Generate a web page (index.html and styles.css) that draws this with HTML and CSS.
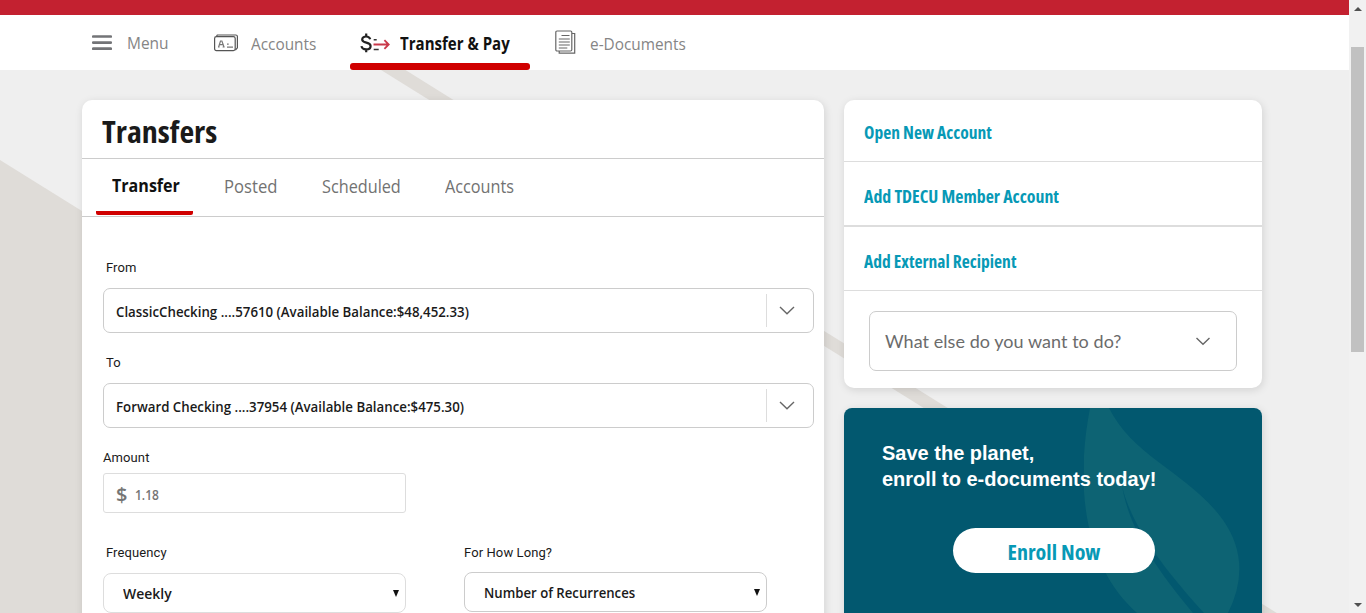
FILE: index.html
```html
<!DOCTYPE html>
<html lang="en">
<head>
<meta charset="utf-8">
<title>Transfers</title>
<link rel="stylesheet" href="styles.css">
</head>
<body>
<div class="app">
  <div class="page">
    <svg class="backdrop" width="1349" height="613" viewBox="0 0 1349 613" aria-hidden="true">
      <path d="M0 160 728 613H0Z"/>
      <path d="M381 70h24.500L1349 658v15Z"/>
    </svg>
    <div class="brandbar"></div>
    <nav class="nav">
      <a class="nav-item nav-menu"><svg width="20" height="16" viewBox="0 0 20 16"><path d="M1.200 1.500h17.600M1.200 7.600h17.600M1.200 13.700h17.600" stroke="#737477" stroke-width="2.700" stroke-linecap="round"/></svg><span class="t t-menu">Menu</span></a>
      <a class="nav-item nav-accounts"><svg width="24" height="18" viewBox="0 0 24 18" fill="none" stroke="#555" stroke-width="1.200"><rect x=".6" y="2.600" width="20.600" height="14" rx="1.800"/><path d="M2.500 2.400 3.300 1h18.500Q23.400 1 23.400 2.600v11.200l-2 2.400"/><path d="M4 13h1.600M8.600 13h2M4.700 12.800 6.500 7h1.400l2 5.800M5.600 10.600h3.500M13 10.100h1.700M13 13.100h6" stroke="#777"/></svg><span class="t t-accounts">Accounts</span></a>
      <a class="nav-item nav-transfer active"><svg width="30" height="22" viewBox="0 0 30 22" fill="none"><path d="M10.200 7.300C9.700 5.500 8.200 4.500 6.100 4.500 3.800 4.500 2.200 5.600 2.200 7.400c0 4.300 8.400 2.200 8.400 6.600 0 2.200-1.800 3.400-4.400 3.400-2.700 0-4.400-1.200-4.700-3.200M6.200 1.500v3M6.200 17.300v3" stroke="#222" stroke-width="2.200"/><path d="M13.700 7.800h3M13.700 17.500h5" stroke="#333" stroke-width="1.600"/><path d="M13.500 12.500h15M24.400 8.200l4.300 4.300-4.300 4.300" stroke="#c9394a" stroke-width="1.800"/></svg><span class="t t-transferpay">Transfer &amp; Pay</span></a>
      <a class="nav-item nav-docs"><svg width="21" height="25" viewBox="0 0 21 25" fill="none" stroke="#666" stroke-width="1.200"><rect x=".8" y="1" width="16" height="20" rx="1.200"/><path d="M17 3.500h2.700v19.700H4.200V21"/><path d="M6.500 5.500h8M3.800 9h11M3.800 12h11M3.800 15h11M3.800 18h8.500"/></svg><span class="t t-docs">e-Documents</span></a>
    </nav>
    <main class="main">
      <section class="card transfers">
        <h1><span class="t t-title">Transfers</span></h1>
        <div class="tabs">
          <a class="tab tab-active"><span class="t t-tab1">Transfer</span></a>
          <a class="tab tab-posted"><span class="t t-tab2">Posted</span></a>
          <a class="tab tab-scheduled"><span class="t t-tab3">Scheduled</span></a>
          <a class="tab tab-accounts"><span class="t t-tab4">Accounts</span></a>
        </div>
        <div class="form">
          <label class="indent">From</label>
          <div class="combo"><span class="t t-from">ClassicChecking ....57610 (Available Balance:$48,452.33)</span><span class="combo-arrow"><svg width="16" height="9" viewBox="0 0 16 9"><path d="m1 1 7 6.800L15 1"/></svg></span></div>
          <label class="indent">To</label>
          <div class="combo"><span class="t t-to">Forward Checking ....37954 (Available Balance:$475.30)</span><span class="combo-arrow"><svg width="16" height="9" viewBox="0 0 16 9"><path d="m1 1 7 6.800L15 1"/></svg></span></div>
          <label>Amount</label>
          <div class="amount"><span class="currency">$</span><span class="t t-amount">1.18</span></div>
          <div class="row">
            <div class="col"><label class="indent">Frequency</label><div class="select light"><span class="t t-weekly">Weekly</span><i class="caret"></i></div></div>
            <div class="col"><label>For How Long?</label><div class="select raised"><span class="t t-number">Number of Recurrences</span><i class="caret"></i></div></div>
          </div>
        </div>
      </section>
      <aside class="side">
        <section class="card links">
          <a><span class="t t-link">Open New Account</span></a>
          <a class="thick"><span class="t t-link t-member">Add TDECU Member Account</span></a>
          <a><span class="t t-link">Add External Recipient</span></a>
          <div class="ask"><span>What else do you want to do?</span><svg width="16" height="9" viewBox="0 0 16 9"><path d="m1.500 1 6.500 6.200L14.500 1"/></svg></div>
        </section>
        <section class="promo">
          <svg class="leaf" width="160" height="205" viewBox="0 0 160 205"><path d="M6 0H25C50 50 105 65 139 112Q169 155 144 205H53C8 165-12 95 6 0Z"/><path class="vein" d="M38 78C48 120 82 163 120 205H109C78 168 46 125 38 78Z"/></svg>
          <p>Save the planet,<br>enroll to e-documents today!</p>
          <a class="enroll"><span class="t t-enroll">Enroll Now</span></a>
        </section>
      </aside>
    </main>
  </div>
  <div class="scrollbar"><i class="up"></i><div class="thumb"></div><i class="down"></i></div>
</div>
</body>
</html>
```
FILE: styles.css
```css
* { box-sizing: border-box; }
body { margin: 0; font-family: "Open Sans", "Noto Sans", sans-serif; color: #1a1a1a; }
.app { width: 1366px; height: 613px; display: flex; overflow: hidden; background: #efefef; }
.page { width: 1349px; height: 613px; position: relative; overflow: hidden; }
.backdrop { position: absolute; inset: 0; fill: #dfdcd8; }
.brandbar { height: 15px; background: #c32130; position: relative; }
.nav { height: 55px; background: #fff; display: flex; position: relative; padding-left: 82px; color: #858585; font-size: 17px; }
.nav-item { display: flex; align-items: center; height: 55px; padding-left: 10px; }
.nav-menu { width: 122px; gap: 15px; }
.nav-accounts { width: 146px; gap: 13px; }
.nav-transfer { width: 180px; gap: 10px; }
.nav-docs { padding-left: 25px; gap: 14px; }
.nav-item.active { color: #111; font-weight: 700; position: relative; }
.nav-item.active::after { content: ""; position: absolute; left: 0; right: 0; bottom: 0; height: 7px; border-radius: 3px; background: #d00000; }
/* Slightly narrowed letterforms for headings, tabs and values */
.t { white-space: nowrap; display: inline-block; transform: scaleX(.885); transform-origin: 0 50%; }
.t-menu { transform: scaleX(.91); }
.t-accounts, .t-docs { transform: scaleX(.904); padding-top: 2px; }
.t-transferpay { padding-top: 2px; }
.t-tab1 { transform: scaleX(.893); }
.t-tab2 { transform: scaleX(.925); }
.t-tab3, .t-tab4 { transform: scaleX(.902); }
.t-weekly { transform: scaleX(.93); }
.t-number { transform: scaleX(.878); }
.t-amount { transform: scaleX(.8); }
.t-title { font-stretch: 75%; transform: scaleX(1.035); }
.t-link { font-stretch: 75%; transform: scaleX(1.03); }
.t-member { transform: scaleX(1.049); }
.t-enroll { font-stretch: 75%; transform: none; }
.main { position: relative; display: flex; gap: 20px; padding: 30px 0 0 82px; align-items: flex-start; }
.card { background: #fff; border-radius: 10px; box-shadow: 1px 2px 8px rgba(0,0,0,.12); }
.transfers { width: 742px; height: 560px; }
h1 { margin: 0; height: 59px; padding: 10px 20px; font-size: 31px; line-height: 42px; font-weight: 700; border-bottom: 1px solid #ccc; }
.tabs { height: 58px; border-bottom: 1px solid #ccc; display: flex; padding-left: 14px; font-size: 18px; color: #727272; }
.tab { height: 56px; line-height: 54px; }
.tab-active { width: 97px; padding-left: 16px; color: #111; font-weight: 700; line-height: 52px; border-bottom: 4px solid #d00000; border-radius: 2px; }
.tab-posted { width: 129px; padding-left: 31px; }
.tab-scheduled { width: 123px; }
.form { padding: 0 10px 0 21px; }
label { display: block; font: 13px/16px Roboto, sans-serif; letter-spacing: .1px; }
.indent { padding-left: 3px; }
.form > label { padding-top: 22px; height: 50px; }
.form > label:first-child { padding-top: 43px; height: 71px; }
.combo { height: 45px; border: 1px solid #ccc; border-radius: 7px; display: flex; align-items: center; justify-content: space-between; padding-left: 12px; font-size: 15px; font-weight: 600; }
.combo-arrow { width: 47px; height: 33px; border-left: 1px solid #ddd; display: flex; align-items: center; padding-left: 12px; }
.combo-arrow svg, .ask svg { fill: none; stroke: #666; stroke-width: 1.4; }
.form > label:nth-of-type(3) { height: 45px; }
.amount { width: 303px; height: 40px; border: 1px solid #ddd; border-radius: 3px; display: flex; align-items: center; padding: 2px 0 0 12px; gap: 7px; color: #757575; font-size: 15px; font-weight: 600; }
.currency { font-size: 20px; width: 12px; }
.row { display: flex; gap: 58px; padding-top: 32px; }
.col { width: 303px; }
.col label { height: 28px; }
.select { height: 40px; border: 1px solid #ccc; border-radius: 8px; display: flex; align-items: center; justify-content: space-between; padding: 0 6px 0 19px; font-size: 15px; font-weight: 600; }
.light { border-color: #ddd; }
.raised { margin-top: -1px; }
.caret { border: 3.500px solid transparent; border-top: 7px solid #111; border-bottom: 0; }
.side { width: 418px; display: flex; flex-direction: column; gap: 20px; }
.links { height: 288px; }
.links a { display: flex; align-items: center; height: 62px; padding: 3px 20px 0; border-bottom: 1px solid #ddd; color: #0799b6; font-size: 17px; font-weight: 700; }
.links .thick { height: 65px; padding-top: 5px; border-bottom-width: 2px; }
.links .thick + a { height: 64px; padding-top: 5px; }
.ask { margin: 20px 25px 0; height: 60px; border: 1px solid #ccc; border-radius: 7px; display: flex; align-items: center; justify-content: space-between; padding: 0 25px 0 15px; color: #6b6b6b; font: 18px Lato, sans-serif; letter-spacing: .05px; }
.promo { height: 240px; border-radius: 8px; background: #02586f; color: #fff; position: relative; overflow: hidden; padding: 32px 38px; box-shadow: 1px 2px 8px rgba(0,0,0,.12); }
.promo p { margin: 0; position: relative; font: bold 20px/26px "Liberation Sans", Arial, sans-serif; }
.leaf { position: absolute; left: 240px; top: 0; fill: #0d6373; }
.leaf .vein { fill: #02586f; }
.enroll { position: relative; width: 202px; height: 45px; margin: 36px 0 0 71px; border-radius: 23px; background: #fff; color: #0799b6; display: flex; align-items: center; justify-content: center; font-size: 22px; font-weight: 700; }
.scrollbar { width: 17px; height: 613px; background: #f1f1f1; display: flex; flex-direction: column; align-items: center; padding: 7px 0 6px; }
.up { border: 4px solid transparent; border-bottom-color: #505050; border-top: 0; }
.down { border: 4px solid transparent; border-top-color: #505050; border-bottom: 0; margin-top: auto; }
.thumb { width: 13px; height: 305px; margin-top: 36px; background: #c1c1c1; }
```
